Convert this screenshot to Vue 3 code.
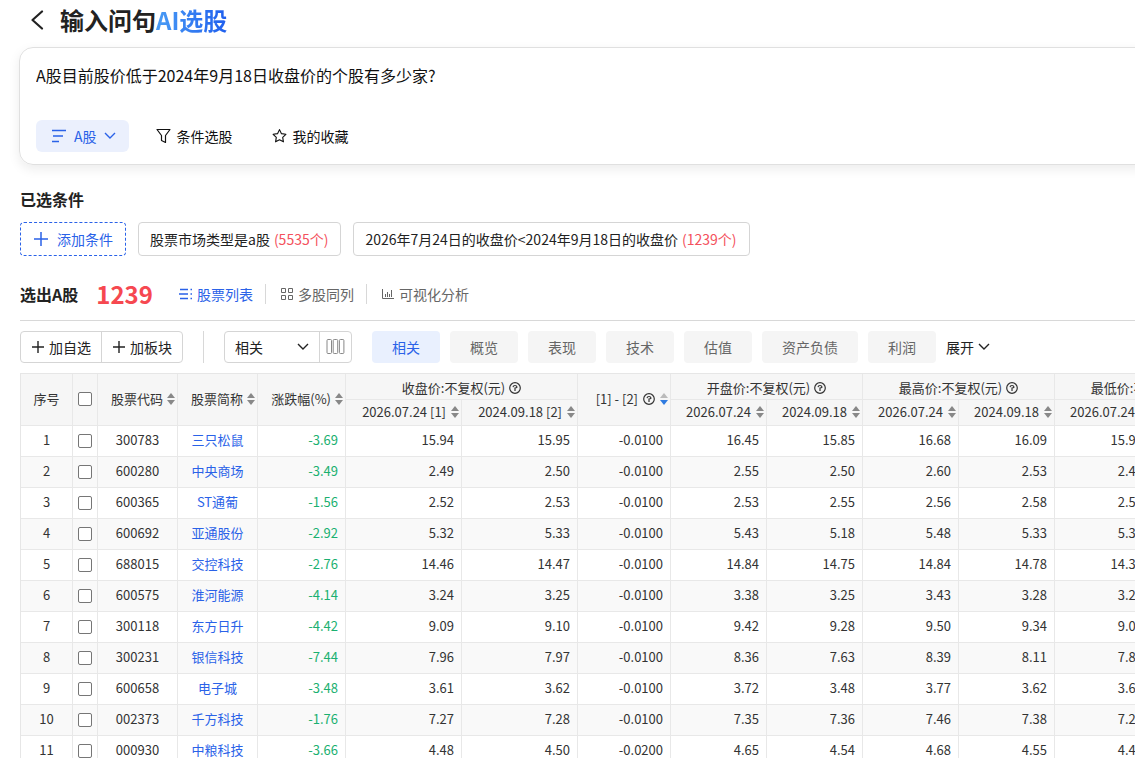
<template>
  <div class="page">
    <!-- 标题 -->
    <header class="page-header">
      <button class="back-btn" type="button" aria-label="返回">
        <svg width="14" height="20" viewBox="0 0 14 20" fill="none" stroke="#222" stroke-width="2.2" stroke-linecap="round" stroke-linejoin="round">
          <path d="M12 1.500 2.500 10 12 18.500" />
        </svg>
      </button>
      <h1>输入问句<span class="ai-text">AI选股</span></h1>
    </header>

    <!-- 问句输入 -->
    <section class="query-card">
      <textarea v-model="query" class="query-input" aria-label="问句" rows="1" spellcheck="false"></textarea>
      <div class="query-tools">
        <button class="tool-btn market" type="button">
          <svg width="16" height="14" viewBox="0 0 16 14" fill="none" stroke="currentColor" stroke-width="1.4">
            <path d="M1 1.500h14M2 7h10M1 12.500h7" />
          </svg>
          <span>A股</span>
          <svg class="arrow" width="12" height="8" viewBox="0 0 12 8" fill="none" stroke="currentColor" stroke-width="1.4">
            <path d="m1 1 5 5 5-5" />
          </svg>
        </button>
        <button class="tool-btn filter" type="button">
          <svg width="15" height="16" viewBox="0 0 15 16" fill="none" stroke="currentColor" stroke-width="1.2" stroke-linejoin="round">
            <path d="M1 1.500h13L9.500 7.500v7L5.500 12.500v-5z" />
          </svg>
          <span>条件选股</span>
        </button>
        <button class="tool-btn" type="button">
          <svg width="15" height="16" viewBox="0 0 16 16" fill="none" stroke="currentColor" stroke-width="1.2" stroke-linejoin="round">
            <path d="m8 1.200 2.100 4.300 4.700.7-3.400 3.300.8 4.700L8 12l-4.200 2.200.8-4.700L1.200 6.200l4.700-.7z" />
          </svg>
          <span>我的收藏</span>
        </button>
      </div>
    </section>

    <!-- 已选条件 -->
    <h2 class="section-title">已选条件</h2>
    <div class="conditions">
      <button class="add-condition" type="button">
        <svg width="14" height="14" viewBox="0 0 14 14" stroke="currentColor" stroke-width="1.5">
          <path d="M7 0v14M0 7h14" />
        </svg>
        <span>添加条件</span>
      </button>
      <button v-for="item in conditions" :key="item.text" class="condition" type="button">
        {{ item.text }} <span class="condition-count">({{ item.count }}个)</span>
      </button>
    </div>

    <!-- 结果统计与视图切换 -->
    <div class="result-bar">
      <h2 class="result-title">选出A股</h2>
      <strong class="result-count">1239</strong>
      <nav class="views">
        <button class="view-btn active" type="button">
          <svg width="14" height="12" viewBox="0 0 14 12" stroke="currentColor" stroke-width="1.5">
            <path d="M1 1.500h8M0 6h9M1 10.500h8M11.500 1.500H13M11.500 6H13M11.500 10.500H13" />
          </svg>
          <span>股票列表</span>
        </button>
        <button class="view-btn" type="button">
          <svg width="14" height="14" viewBox="0 0 14 14" fill="none" stroke="currentColor">
            <path d="M1.500 1.500h4v4h-4zM8.500 1.500h4v4h-4zM1.500 8.500h4v4h-4zM8.500 8.500h4v4h-4z" />
          </svg>
          <span>多股同列</span>
        </button>
        <button class="view-btn" type="button">
          <svg width="14" height="12" viewBox="0 0 14 12" fill="none" stroke="currentColor">
            <path d="M1.500 1v9.500H13M4.500 6v3M6.500 4v5M8.500 6v3M10.500 2v7" />
          </svg>
          <span>可视化分析</span>
        </button>
      </nav>
    </div>

    <!-- 工具栏 -->
    <div class="toolbar">
      <div class="btn-group">
        <button v-for="name in ['加自选', '加板块']" :key="name" type="button">
          <svg width="12" height="12" viewBox="0 0 12 12" stroke="currentColor" stroke-width="1.4">
            <path d="M6 0v12M0 6h12" />
          </svg>
          <span>{{ name }}</span>
        </button>
      </div>
      <div class="separator"></div>
      <div class="column-picker">
        <div class="select-wrap">
          <select v-model="activeTab" aria-label="指标分组">
            <option v-for="tab in tabs" :key="tab">{{ tab }}</option>
          </select>
          <svg width="12" height="8" viewBox="0 0 12 8" fill="none" stroke="#222" stroke-width="1.4">
            <path d="m1 1 5 5 5-5" />
          </svg>
        </div>
        <button class="columns-btn" type="button" aria-label="列设置">
          <svg width="19" height="16" viewBox="0 0 19 16" fill="none" stroke="#888">
            <rect x="1" y=".5" width="4.5" height="14" rx="1" />
            <rect x="7.2" y=".5" width="4.5" height="14" rx="1" />
            <rect x="13.4" y=".5" width="4.5" height="14" rx="1" />
          </svg>
        </button>
      </div>
      <div class="tabs">
        <button
          v-for="tab in tabs"
          :key="tab"
          type="button"
          :class="{ active: tab === activeTab }"
          @click="activeTab = tab"
        >{{ tab }}</button>
      </div>
      <button class="expand-btn" type="button">
        <span>展开</span>
        <svg width="12" height="8" viewBox="0 0 12 8" fill="none" stroke="currentColor" stroke-width="1.4">
          <path d="m1 1 5 5 5-5" />
        </svg>
      </button>
    </div>

    <!-- 股票列表 -->
    <div class="table-wrap">
      <table>
        <colgroup>
          <col class="col-index" />
          <col class="col-check" />
          <col class="col-stock" span="2" />
          <col class="col-change" />
          <col class="col-close" span="2" />
          <col class="col-diff" />
          <col class="col-price" span="6" />
        </colgroup>
        <thead>
          <tr>
            <th rowspan="2" class="center">序号</th>
            <th rowspan="2" class="center">
              <input v-model="allChecked" type="checkbox" aria-label="全选" />
            </th>
            <th v-for="name in ['股票代码', '股票简称', '涨跌幅(%)']" :key="name" rowspan="2" class="sortable">
              <span class="head">
                {{ name }}
                <svg class="sort" width="8" height="12" viewBox="0 0 8 12">
                  <path class="up" d="M4 0 8 5H0z" /><path class="down" d="M4 12 0 7h8z" />
                </svg>
              </span>
            </th>
            <th colspan="2" class="group">
              <span class="head">
                收盘价:不复权(元)
                <svg class="help" width="12" height="12" viewBox="0 0 12 12" fill="none" stroke="currentColor" stroke-width="1.2">
                  <circle cx="6" cy="6" r="5.3" /><path d="M4 5.200Q4.300 3.500 6 3.500t2 1.700Q7.400 6 6 6V9" />
                </svg>
              </span>
            </th>
            <th rowspan="2" class="sortable">
              <span class="head wide">
                [1] - [2]
                <svg class="help" width="12" height="12" viewBox="0 0 12 12" fill="none" stroke="currentColor" stroke-width="1.2">
                  <circle cx="6" cy="6" r="5.3" /><path d="M4 5.200Q4.300 3.500 6 3.500t2 1.700Q7.400 6 6 6V9" />
                </svg>
                <svg class="sort desc" width="8" height="12" viewBox="0 0 8 12">
                  <path class="up" d="M4 0 8 5H0z" /><path class="down" d="M4 12 0 7h8z" />
                </svg>
              </span>
            </th>
            <th v-for="name in ['开盘价', '最高价', '最低价']" :key="name" colspan="2" class="group">
              <span class="head">
                {{ name }}:不复权(元)
                <svg class="help" width="12" height="12" viewBox="0 0 12 12" fill="none" stroke="currentColor" stroke-width="1.2">
                  <circle cx="6" cy="6" r="5.3" /><path d="M4 5.200Q4.300 3.500 6 3.500t2 1.700Q7.400 6 6 6V9" />
                </svg>
              </span>
            </th>
          </tr>
          <tr>
            <th v-for="(name, idx) in dateHeads" :key="idx" class="sortable">
              <span class="head wide">
                {{ name }}
                <svg class="sort" width="8" height="12" viewBox="0 0 8 12">
                  <path class="up" d="M4 0 8 5H0z" /><path class="down" d="M4 12 0 7h8z" />
                </svg>
              </span>
            </th>
          </tr>
        </thead>
        <tbody>
          <tr v-for="(row, idx) in stocks" :key="row.code">
            <td class="center">{{ idx + 1 }}</td>
            <td class="check">
              <input v-model="checked" type="checkbox" :value="row.code" :aria-label="'选择' + row.name" />
            </td>
            <td class="center">{{ row.code }}</td>
            <td class="center"><a :href="'#' + row.code">{{ row.name }}</a></td>
            <td class="fall">{{ row.change }}</td>
            <td v-for="(value, i) in row.values" :key="i">{{ value }}</td>
          </tr>
        </tbody>
      </table>
    </div>
  </div>
</template>

<script setup>
import { ref, computed } from 'vue'

const query = ref('A股目前股价低于2024年9月18日收盘价的个股有多少家?')
const activeTab = ref('相关')
const checked = ref([])

const tabs = ['相关', '概览', '表现', '技术', '估值', '资产负债', '利润']

const conditions = [
  { text: '股票市场类型是a股', count: 5535 },
  { text: '2026年7月24日的收盘价<2024年9月18日的收盘价', count: 1239 }
]

const dateHeads = [
  '2026.07.24 [1]', '2024.09.18 [2]',
  '2026.07.24', '2024.09.18',
  '2026.07.24', '2024.09.18',
  '2026.07.24', '2024.09.18'
]

// 代码, 简称, 涨跌幅, 收盘价x2, 差值, 开盘价x2, 最高价x2, 最低价x2
const rows = [
  ['300783', '三只松鼠', '-3.69', '15.94', '15.95', '-0.0100', '16.45', '15.85', '16.68', '16.09', '15.90', '15.62'],
  ['600280', '中央商场', '-3.49', '2.49', '2.50', '-0.0100', '2.55', '2.50', '2.60', '2.53', '2.48', '2.45'],
  ['600365', 'ST通葡', '-1.56', '2.52', '2.53', '-0.0100', '2.53', '2.55', '2.56', '2.58', '2.50', '2.48'],
  ['600692', '亚通股份', '-2.92', '5.32', '5.33', '-0.0100', '5.43', '5.18', '5.48', '5.33', '5.31', '5.15'],
  ['688015', '交控科技', '-2.76', '14.46', '14.47', '-0.0100', '14.84', '14.75', '14.84', '14.78', '14.36', '14.22'],
  ['600575', '淮河能源', '-4.14', '3.24', '3.25', '-0.0100', '3.38', '3.25', '3.43', '3.28', '3.23', '3.20'],
  ['300118', '东方日升', '-4.42', '9.09', '9.10', '-0.0100', '9.42', '9.28', '9.50', '9.34', '9.06', '9.02'],
  ['300231', '银信科技', '-7.44', '7.96', '7.97', '-0.0100', '8.36', '7.63', '8.39', '8.11', '7.88', '7.60'],
  ['600658', '电子城', '-3.48', '3.61', '3.62', '-0.0100', '3.72', '3.48', '3.77', '3.62', '3.60', '3.45'],
  ['002373', '千方科技', '-1.76', '7.27', '7.28', '-0.0100', '7.35', '7.36', '7.46', '7.38', '7.25', '7.19'],
  ['000930', '中粮科技', '-3.66', '4.48', '4.50', '-0.0200', '4.65', '4.54', '4.68', '4.55', '4.45', '4.43']
]

const stocks = rows.map(([code, name, change, ...values]) => ({ code, name, change, values }))

// 全选
const allChecked = computed({
  get: () => checked.value.length === stocks.length,
  set: (val) => {
    checked.value = val ? stocks.map(item => item.code) : []
  }
})
</script>

<style>
body {
  margin: 0;
  background: #fff;
}
</style>

<style scoped>
.page {
  box-sizing: border-box;
  height: 100vh;
  overflow: hidden;
  padding-left: 20px;
  font-family: "Noto Sans CJK SC", sans-serif;
  font-size: 14px;
  line-height: 20px;
  color: #222;
}

button,
select,
textarea {
  margin: 0;
  padding: 0;
  border: none;
  background: none;
  font: inherit;
  color: inherit;
}

button {
  display: flex;
  align-items: center;
  white-space: nowrap;
  cursor: pointer;
}

svg {
  flex-shrink: 0;
}

h1,
h2 {
  margin: 0;
}

/* 标题 */
.page-header {
  display: flex;
  align-items: center;
  gap: 16px;
  height: 40px;
  padding-left: 10px;
}

.page-header h1 {
  font-size: 24px;
  line-height: 36px;
  font-weight: 700;
}

.ai-text {
  background: linear-gradient(90deg, #4a9cf5, #1f5fee);
  -webkit-background-clip: text;
  background-clip: text;
  color: transparent;
}

/* 问句卡片 */
.query-card {
  margin: 7px -20px 0 -1px;
  padding: 15px 16px 12px;
  border: 1px solid #e0e0e0;
  border-radius: 14px;
  box-shadow: 0 4px 12px rgba(0, 0, 0, 0.08);
}

.query-input {
  display: block;
  width: 100%;
  height: 57px;
  resize: none;
  outline: none;
  overflow: hidden;
  font-size: 16px;
  line-height: 24px;
  color: #111;
}

.query-tools {
  display: flex;
  align-items: center;
  color: #111;
}

.tool-btn {
  gap: 6px;
  height: 32px;
  margin-right: 39px;
}

.tool-btn.market {
  gap: 7px;
  margin-right: 27px;
  padding: 0 13px 0 15px;
  border-radius: 6px;
  background: #ebf0fd;
  color: #2a62e8;
}

/* 条件 */
.section-title {
  margin-top: 22px;
  font-size: 16px;
  line-height: 24px;
}

.conditions {
  display: flex;
  gap: 12px;
  margin-top: 11px;
}

.conditions button {
  box-sizing: border-box;
  height: 34px;
  padding: 0 12px;
  border: 1px solid #d5d5d5;
  border-radius: 4px;
}

.conditions .condition {
  padding: 0 12px 0 11px;
}

.conditions .add-condition {
  gap: 9px;
  padding: 0 12px 0 13px;
  border: 1px dashed #2a62e8;
  color: #2a62e8;
}

.condition-count {
  margin-left: 4px;
  color: #f4515c;
}

/* 结果 */
.result-bar {
  display: flex;
  align-items: center;
  box-sizing: border-box;
  height: 51px;
  margin-top: 14px;
  padding-bottom: 2px;
  border-bottom: 1px solid #d8d8d8;
}

.result-title {
  font-size: 16px;
  line-height: 24px;
}

.result-count {
  margin: 0 14px 0 18px;
  font-size: 24px;
  line-height: 36px;
  color: #f64850;
}

.views {
  display: flex;
  align-items: center;
}

.view-btn {
  gap: 4px;
  padding: 0 12px;
  color: #666;
}

.view-btn + .view-btn {
  padding-left: 14px;
  border-left: 1px solid #d8d8d8;
}

.view-btn.active {
  color: #2a62e8;
}

/* 工具栏 */
.toolbar {
  display: flex;
  align-items: center;
  padding: 10px 0;
}

.btn-group,
.column-picker {
  display: flex;
  box-sizing: border-box;
  height: 32px;
  border: 1px solid #d5d5d5;
  border-radius: 4px;
}

.btn-group button {
  gap: 5px;
  padding: 0 10px 0 11px;
}

.btn-group button + button,
.columns-btn {
  border-left: 1px solid #d5d5d5;
}

.separator {
  width: 1px;
  height: 32px;
  margin: 0 20px;
  background: #d8d8d8;
}

.select-wrap {
  display: grid;
  align-items: center;
  width: 94px;
}

.select-wrap > * {
  grid-area: 1 / 1;
}

.select-wrap select {
  width: 100%;
  height: 30px;
  padding-left: 10px;
  appearance: none;
  outline: none;
}

.select-wrap svg {
  justify-self: end;
  margin-right: 10px;
  pointer-events: none;
}

.columns-btn {
  padding: 0 6px;
}

.tabs {
  display: flex;
  gap: 10px;
  margin: 0 10px 0 20px;
}

.tabs button {
  height: 32px;
  padding: 0 20px;
  border-radius: 4px;
  background: #f5f5f5;
  color: #666;
}

.tabs button.active {
  background: #e9f0fe;
  color: #2a62e8;
}

.expand-btn {
  gap: 4px;
}

/* 表格 */
.table-wrap {
  overflow-x: auto;
}

table {
  width: 1227px;
  table-layout: fixed;
  border-collapse: separate;
  border-spacing: 0;
  border: 1px solid #e6e6e6;
  border-width: 1px 0 0 1px;
  font-size: 13px;
  line-height: 20px;
  color: #333;
}

.col-index {
  width: 52px;
}

.col-check {
  width: 25px;
}

.col-stock {
  width: 80px;
}

.col-change {
  width: 88px;
}

.col-close {
  width: 116px;
}

.col-diff {
  width: 93px;
}

.col-price {
  width: 96px;
}

th,
td {
  box-sizing: border-box;
  padding: 0 0 2px;
  border-right: 1px solid #e8e8e8;
  border-bottom: 1px solid #e8e8e8;
  white-space: nowrap;
}

th {
  height: 26px;
  background: #f6f6f6;
  font-weight: 400;
}

td {
  height: 31px;
  padding: 0 7px 2px;
  text-align: right;
}

tbody tr:nth-child(even) {
  background: #f9f9f9;
}

.center {
  padding: 0 0 2px;
  text-align: center;
}

.check {
  padding: 0;
}

.group {
  padding: 2px 0 0;
  text-align: center;
}

.sortable {
  padding-right: 2px;
  text-align: right;
}

.head {
  display: inline-flex;
  align-items: center;
  gap: 4px;
  vertical-align: middle;
}

.head.wide {
  gap: 5px;
}

.sort {
  fill: #888;
}

.sort.desc .up {
  fill: #bbb;
}

.sort.desc .down {
  fill: #2f7be0;
}

input[type="checkbox"] {
  display: block;
  width: 14px;
  height: 14px;
  margin: 0 auto;
  box-sizing: border-box;
  appearance: none;
  border: 1px solid #767676;
  border-radius: 2px;
  background: #fff;
}

input[type="checkbox"]:checked {
  background: #2a62e8;
  border-color: #2a62e8;
}

td a {
  color: #2a62e8;
  text-decoration: none;
}

.fall {
  color: #1ab070;
}
</style>
